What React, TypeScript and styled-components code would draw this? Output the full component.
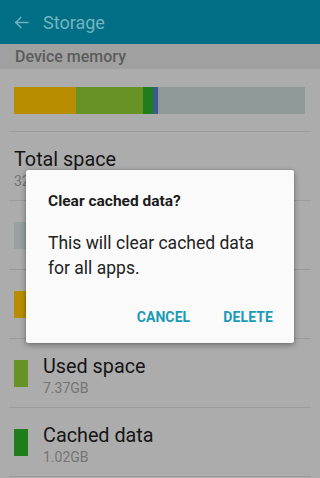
import React from "react";
import styled, { createGlobalStyle } from "styled-components";

const Global = createGlobalStyle`
  html, body { margin: 0; padding: 0; background: #acacac; }
  body { font-family: Roboto, "Noto Sans", Arial, sans-serif; }
  * { box-sizing: border-box; }
`;

const Screen = styled.div`
  position: relative;
  width: 320px;
  height: 478px;
  overflow: hidden;
  background: #acacac;
`;

const Header = styled.header`
  height: 44px;
  background: #006f86;
  display: flex;
  align-items: center;
  padding-left: 13px;
  gap: 13px;
`;

const HeaderTitle = styled.h1`
  margin: 0;
  font-size: 18px;
  font-weight: 400;
  color: #74b4c0;
  line-height: 24px;
  padding-top: 1px;
`;

const SectionHeader = styled.div`
  height: 25px;
  background: #a0a0a0;
  padding-left: 15px;
  display: flex;
  align-items: center;
  font-size: 16px;
  font-weight: 500;
  color: #5b5b5b;
`;

const BarWrap = styled.div`
  margin: 0 9px;
  padding: 18px 5px 0;
  height: 63px;
  border-bottom: 1px solid #9b9b9b;
`;

const Bar = styled.div`
  display: flex;
  height: 27px;
  width: 291px;
`;

const Seg = styled.div<{ $c: string }>`
  background: ${(p) => p.$c};
  height: 100%;
`;

const Row = styled.div`
  margin: 0 9px;
  height: 69px;
  border-bottom: 1px solid #9b9b9b;
  display: flex;
  align-items: flex-start;
  padding: 16px 5px 0;
  gap: 15px;
`;

const Swatch = styled.div<{ $c: string }>`
  width: 14px;
  height: 27px;
  margin-top: 5px;
  background: ${(p) => p.$c};
  flex: none;
`;

const RowText = styled.div`
  display: flex;
  flex-direction: column;
`;

const RowTitle = styled.div`
  font-size: 19.8px;
  line-height: 24px;
  color: #151515;
`;

const RowSub = styled.div`
  font-size: 14px;
  line-height: 18px;
  color: #747474;
`;

const Dialog = styled.div`
  position: absolute;
  left: 26px;
  top: 170px;
  width: 268px;
  height: 173px;
  background: #fafafa;
  border-radius: 2px;
  box-shadow: 0 2px 6px rgba(0, 0, 0, 0.35), 0 0 2px rgba(0, 0, 0, 0.2);
  padding: 20px 21px 0 22px;
  display: flex;
  flex-direction: column;
`;

const DialogTitle = styled.div`
  font-size: 15.5px;
  font-weight: 700;
  line-height: 22px;
  color: #1c1c1c;
`;

const DialogBody = styled.div`
  margin-top: 19px;
  font-size: 17.5px;
  line-height: 25px;
  color: #222;
`;

const Actions = styled.div`
  margin-top: 26px;
  display: flex;
  justify-content: flex-end;
  gap: 33px;
`;

const ActionButton = styled.button`
  border: none;
  background: none;
  padding: 0;
  font-family: Roboto, Arial, sans-serif;
  font-size: 14px;
  font-weight: 700;
  line-height: 20px;
  color: #1b9bb5;
  letter-spacing: 0.1px;
`;

const BackArrow = () => (
  <svg width="17" height="17" viewBox="0 0 24 24" fill="none" stroke="#74b4c0" strokeWidth="2" strokeLinecap="square">
    <path d="M21 12H4" />
    <path d="M11 5l-7 7 7 7" />
  </svg>
);

const segments = [
  { c: "#b88e00", w: 62 },
  { c: "#679225", w: 67 },
  { c: "#1f7d1c", w: 10 },
  { c: "#3e5a8c", w: 5 },
  { c: "#8f9997", w: 147 },
];

const rows = [
  { title: "Available space", sub: "23.61GB", c: "#97a2a0" },
  { title: "System memory", sub: "5.30GB", c: "#b88e00" },
  { title: "Used space", sub: "7.37GB", c: "#679225" },
  { title: "Cached data", sub: "1.02GB", c: "#1f7d1c" },
];

export default function App() {
  return (
    <>
      <Global />
      <Screen>
        <Header>
          <BackArrow />
          <HeaderTitle>Storage</HeaderTitle>
        </Header>
        <SectionHeader>Device memory</SectionHeader>
        <BarWrap>
          <Bar>
            {segments.map((s, i) => (
              <Seg key={i} $c={s.c} style={{ width: s.w }} />
            ))}
          </Bar>
        </BarWrap>
        <Row>
          <RowText>
            <RowTitle>Total space</RowTitle>
            <RowSub>32.00GB</RowSub>
          </RowText>
        </Row>
        {rows.map((r) => (
          <Row key={r.title}>
            <Swatch $c={r.c} />
            <RowText>
              <RowTitle>{r.title}</RowTitle>
              <RowSub>{r.sub}</RowSub>
            </RowText>
          </Row>
        ))}
        <Dialog>
          <DialogTitle>Clear cached data?</DialogTitle>
          <DialogBody>
            This will clear cached data
            <br />
            for all apps.
          </DialogBody>
          <Actions>
            <ActionButton>CANCEL</ActionButton>
            <ActionButton>DELETE</ActionButton>
          </Actions>
        </Dialog>
      </Screen>
    </>
  );
}
